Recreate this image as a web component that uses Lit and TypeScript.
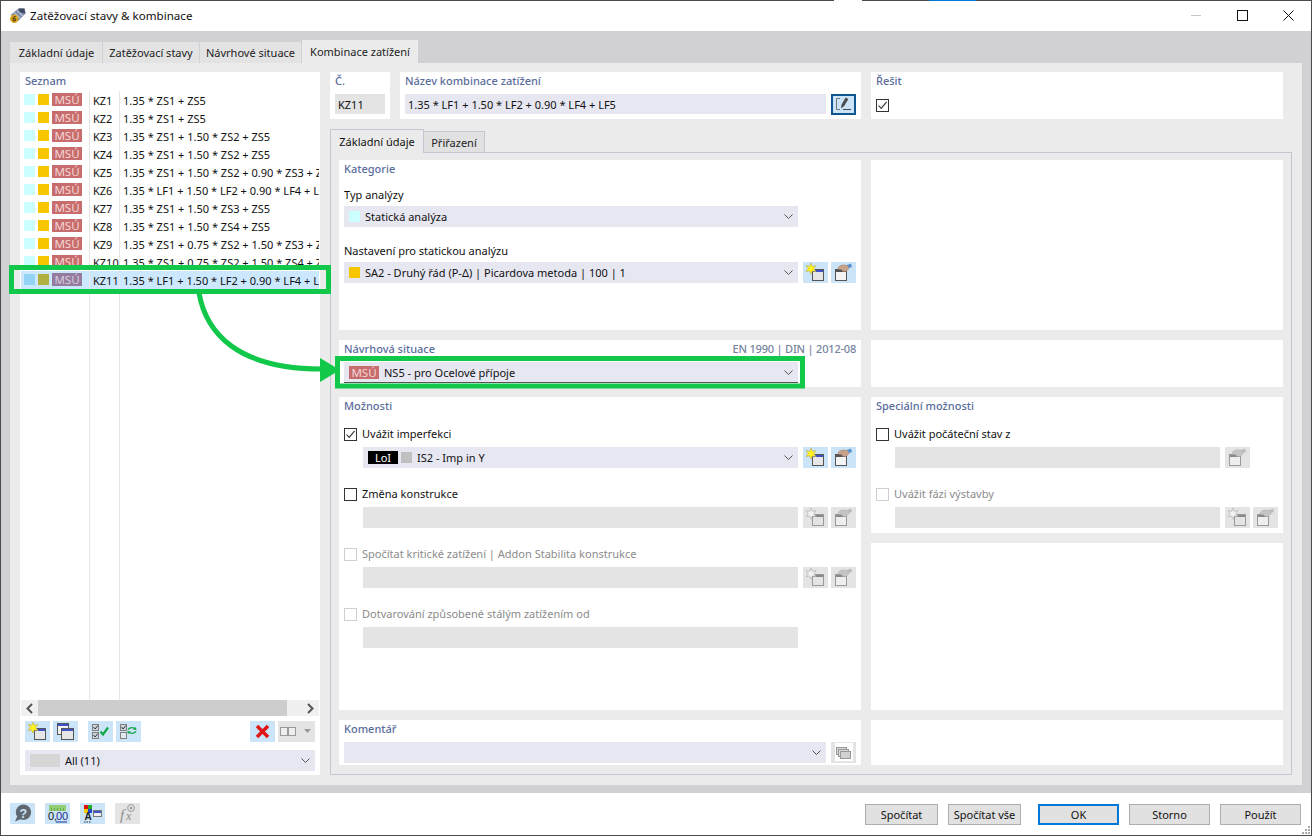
import { LitElement, html, svg, css } from 'lit';
import { customElement } from 'lit/decorators.js';

const chevron = html`<svg class="chev" width="9" height="5" viewBox="0 0 9 5"><path d="M0.5 0.5 L4.5 4.5 L8.5 0.5" fill="none" stroke="#555" stroke-width="1"/></svg>`;
const tick = html`<svg width="11" height="11" viewBox="0 0 11 11"><path d="M1.5 5.5 L4.2 8.4 L9.6 1.8" fill="none" stroke="#333" stroke-width="1.1"/></svg>`;

// small window glyph shared by most toolbar icons
const win = (x: number, y: number, w: number, h: number, bar = '#3f52c8', edge = '#555', fill = '#e6e6e6') => svg`
  <rect x=${x + .5} y=${y + .5} width=${w} height=${h} fill=${fill} stroke=${edge}/>
  <rect x=${x + 1} y=${y + 1} width=${w - 1} height="2" fill=${bar}/>`;

const newIcon = (off = false) => html`<svg width="25" height="21" viewBox="0 0 25 21">
  ${win(9, 7, 11, 11, off ? '#888' : '#3f52c8', off ? '#999' : '#555', off ? '#e4e4e4' : '#e6e6e6')}
  <path d="M8 1 L9.3 4.4 L13 3.6 L10.8 6.6 L13 9.6 L9.4 8.9 L8 12.2 L6.6 8.9 L3 9.6 L5.2 6.6 L3 3.6 L6.7 4.4 Z"
    fill=${off ? '#f2f2f2' : '#fff21e'} stroke=${off ? '#aaa' : '#b9a95a'} stroke-width=".6"/>
</svg>`;

const editIcon = (off = false) => html`<svg width="25" height="21" viewBox="0 0 25 21">
  ${win(4, 7, 11, 11, off ? '#888' : '#555', off ? '#999' : '#555', off ? '#eee' : '#f4f4f4')}
  <path d="M7 6 C8 3.5 11 3 13 3 L17 3.5 L18 6.5 L15 9.5 L12 9.5 L10.5 7.5 L8 7.5 Z" fill=${off ? '#c4c4c4' : '#c9a389'} stroke=${off ? '#aaa' : '#9d7a66'} stroke-width=".5"/>
  <path d="M16 3 L20 1.5 L21 5 L18 6 Z" fill=${off ? '#bbb' : '#5d8fd0'}/>
</svg>`;

const copyIcon = html`<svg width="25" height="21" viewBox="0 0 25 21">
  ${win(4, 2, 11, 11, '#3f52c8', '#555', '#f2f2f2')}
  ${win(8, 7, 12, 11)}
</svg>`;

const checkBox = (y: number, on = true) => svg`
  <rect x="4.5" y=${y + .5} width="6" height="6" fill=${on ? '#cdd6dd' : '#e4e9ee'} stroke="#808080"/>
  ${on ? svg`<path d="M5.5 ${y + 3} L7.2 ${y + 5} L9.8 ${y + 1.5}" fill="none" stroke="#333"/>` : ''}`;

const checkAllIcon = html`<svg width="25" height="21" viewBox="0 0 25 21">
  ${checkBox(3)}${checkBox(11)}
  <path d="M12.5 10.5 L15 13.5 L20 6.5" fill="none" stroke="#12a84a" stroke-width="2.2"/>
</svg>`;

const checkSwapIcon = html`<svg width="25" height="21" viewBox="0 0 25 21">
  ${checkBox(3)}${checkBox(11, false)}
  <path d="M12 8.5 C14 6.4 17 6.4 19 7.6" fill="none" stroke="#12a84a" stroke-width="1.4"/>
  <path d="M19.8 6 L20.6 9 L17 8.6 Z" fill="#12a84a"/>
  <path d="M20 10.5 C18 12.6 15 12.6 13 11.5" fill="none" stroke="#12a84a" stroke-width="1.4"/>
  <path d="M12 13 L11.2 10 L14.8 10.4 Z" fill="#12a84a"/>
</svg>`;

const deleteIcon = html`<svg width="25" height="21" viewBox="0 0 25 21">
  <path d="M7 5 L18 16 M18 5 L7 16" stroke="#e01414" stroke-width="3.4"/>
</svg>`;

const columnsIcon = html`<svg width="37" height="21" viewBox="0 0 37 21">
  <rect x="2.5" y="6.5" width="7" height="8" fill="#eee" stroke="#999"/>
  <rect x="10.5" y="6.5" width="7" height="8" fill="#eee" stroke="#999"/>
  <path d="M26 8 L33 8 L29.5 12 Z" fill="#999"/>
</svg>`;

const pencilIcon = html`<svg width="21" height="17" viewBox="0 0 21 17">
  <path d="M7 2.5 H3.5 V13.5 H7" fill="none" stroke="#777"/>
  <path d="M10 13.5 H18" stroke="#444"/>
  <path d="M8 12.5 L8.6 8.6 L12.6 1.6 L15.4 3 L11.2 10 Z" fill="#4d4d4d"/>
</svg>`;

const commentIcon = html`<svg width="25" height="21" viewBox="0 0 25 21">
  <rect x="4" y="1" width="18" height="18" fill="#fff"/>
  <rect x="5.5" y="5.5" width="10" height="7" fill="#d8d8d8" stroke="#999"/>
  <rect x="7.5" y="7.5" width="10" height="7" fill="#d8d8d8" stroke="#999"/>
  <rect x="9.5" y="9.5" width="10" height="7" fill="#d0d0d0" stroke="#999"/>
</svg>`;

const helpIcon = html`<svg width="25" height="21" viewBox="0 0 25 21">
  <path d="M5 18.5 L7.2 13.5 A7.6 7.6 0 1 1 10.5 16.2 Z" fill="#5f6770"/>
  <text x="13.4" y="14.5" text-anchor="middle" class="ic-t" font-size="12.5" font-weight="700" fill="#cfe4f5">?</text>
</svg>`;

const unitsIcon = html`<svg width="25" height="21" viewBox="0 0 25 21">
  <rect x="4" y="2" width="17" height="6" fill="#93cf75"/>
  <path d="M6.5 5 V8 M9.5 5 V8 M12.5 5 V8 M15.5 5 V8 M18.5 5 V8" stroke="#6ea552"/>
  <text x="3" y="17" class="ic-t" font-size="11" fill="#111">0,</text>
  <text x="11" y="17" class="ic-t" font-size="11" fill="#1b2f8a">00</text>
  <path d="M11 19 H22" stroke="#1b2f8a"/>
</svg>`;

const colorsIcon = html`<svg width="25" height="21" viewBox="0 0 25 21">
  <rect x="4" y="2" width="4" height="4" fill="#d11"/><rect x="8" y="2" width="4" height="4" fill="#2a2"/>
  <rect x="4" y="6" width="4" height="4" fill="#ec0"/><rect x="8" y="6" width="4" height="4" fill="#24c"/>
  <text x="8" y="17" text-anchor="middle" class="ic-t" font-size="10" font-weight="700" fill="#222">A</text>
  <path d="M4 19 H5.5 M6.5 19 H8 M9 19 H10.5" stroke="#333"/>
  ${win(13, 7, 8, 6, '#3f52c8', '#777', '#eee')}
</svg>`;

const fxIcon = html`<svg width="25" height="21" viewBox="0 0 25 21">
  <text x="5" y="17" class="ic-s" font-size="15" font-style="italic" fill="#8d8d8d">f</text>
  <text x="11" y="17" class="ic-s" font-size="12" font-style="italic" fill="#8d8d8d">x</text>
  <circle cx="16" cy="5" r="3.4" fill="none" stroke="#9a9a9a"/><circle cx="16" cy="5" r="1.3" fill="#9a9a9a"/>
</svg>`;

const rows = [
  ['KZ1', '1.35 * ZS1 + ZS5'],
  ['KZ2', '1.35 * ZS1 + ZS5'],
  ['KZ3', '1.35 * ZS1 + 1.50 * ZS2 + ZS5'],
  ['KZ4', '1.35 * ZS1 + 1.50 * ZS2 + ZS5'],
  ['KZ5', '1.35 * ZS1 + 1.50 * ZS2 + 0.90 * ZS3 + ZS5'],
  ['KZ6', '1.35 * LF1 + 1.50 * LF2 + 0.90 * LF4 + LF5'],
  ['KZ7', '1.35 * ZS1 + 1.50 * ZS3 + ZS5'],
  ['KZ8', '1.35 * ZS1 + 1.50 * ZS4 + ZS5'],
  ['KZ9', '1.35 * ZS1 + 0.75 * ZS2 + 1.50 * ZS3 + ZS5'],
  ['KZ10', '1.35 * ZS1 + 0.75 * ZS2 + 1.50 * ZS4 + ZS5'],
  ['KZ11', '1.35 * LF1 + 1.50 * LF2 + 0.90 * LF4 + LF5'],
];

@customElement('app-root')
export class AppRoot extends LitElement {
  static styles = css`
    :host {
      display: block;
      width: 1312px;
      height: 836px;
      position: relative;
      overflow: hidden;
      font-family: "Noto Sans", sans-serif;
      font-size: 11px;
      color: #111;
    }
    * { box-sizing: border-box; }
    svg { display: block; flex: none; }
    .ic-t { font-family: "Liberation Sans", sans-serif; }
    .ic-s { font-family: "Liberation Serif", serif; }

    .win {
      width: 1312px;
      height: 836px;
      display: flex;
      flex-direction: column;
      background: #fff;
      border: 1px solid #4b4b4b;
    }
    .titlebar {
      height: 30px;
      flex: none;
      display: flex;
      align-items: center;
      padding: 0 0 2px 8px;
      font-size: 11.6px;
    }
    .titlebar .name { margin-left: 4px; flex: 1; }
    .wc { width: 46px; height: 30px; flex: none; display: flex; align-items: center; justify-content: center; }

    .client {
      height: 762px;
      flex: none;
      background: #d0d0d5;
      padding: 9px 9px 8px;
      display: flex;
      flex-direction: column;
    }
    .tabs { display: flex; align-items: flex-end; height: 23px; flex: none; gap: 1px; }
    .tab {
      height: 21px;
      background: #e3e3e3;
      display: flex;
      align-items: center;
      justify-content: center;
      color: #222;
    }
    .tab.on { height: 23px; background: #ebebeb; }
    .t1 { width: 92px; padding-left: 1px; } .t2 { width: 96px; } .t3 { width: 101px; } .t4 { width: 116px; }

    .panel {
      flex: 1;
      background: #ebebeb;
      padding: 9px 10px 10px;
      display: flex;
      gap: 10px;
      min-height: 0;
    }
    .box { background: #fff; }
    .sec {
      height: 18px;
      line-height: 18px;
      font-weight: 500;
      color: #5b6d9c;
      white-space: nowrap;
    }

    /* left list */
    .list { width: 300px; flex: none; display: flex; flex-direction: column; padding: 0 1px 4px; }
    .list > .sec { padding-left: 4px; height: 19px; }
    .grid { flex: 1; height: 609px; display: flex; flex-direction: column; overflow: hidden; }
    .row { height: 18px; flex: none; display: flex; line-height: 20px; white-space: nowrap; }
    .row.sel { background: #cce8ff; }
    .c1, .c2 { border-right: 1px solid #e6e6e6; flex: none; }
    .c1 { width: 69px; display: flex; align-items: flex-start; gap: 3px; padding: 3px 0 0 3px; }
    .c2 { width: 30px; padding-left: 3px; }
    .c3 { flex: 1; padding-left: 3px; overflow: hidden; min-width: 0; }
    .fill { flex: 1; display: flex; }
    .sw { width: 11px; height: 11px; flex: none; }
    .cyan { background: #ccffff; }
    .gold { background: #f8c600; }
    .grey { background: #c0c0c0; }
    .row.sel .cyan { background: #93d3f5; }
    .row.sel .gold { background: #b0b040; }
    .tag {
      width: 30px;
      height: 13px;
      line-height: 13px;
      margin-top: -1px;
      text-align: center;
      background: #c86d6d;
      color: #f3d6d6;
      flex: none;
      font-size: 11.5px;
    }
    .row.sel .tag { background: #957c9c; color: #d8cbe0; }
    .tag.plain { margin-top: 0; }
    .tag.lol { background: #000; color: #fff; font-size: 11px; }
    .inl { display: flex; align-items: center; gap: 5px; }
    .inl.tight { gap: 3px; }
    .inl.tight span { margin-left: 2px; }

    .scroll { height: 16px; flex: none; background: #f0f0f0; display: flex; align-items: center; }
    .scroll .thumb { width: 249px; height: 16px; background: #cdcdcd; }
    .scroll .rest { flex: 1; }
    .arr { width: 17px; display: flex; justify-content: center; }
    .tools { display: flex; margin: 5px 4px 0; gap: 3px; flex: none; }
    .tools .spread { flex: 1; }
    .tools .g10 { margin-left: 7px; }
    .list .dd { margin: 8px 4px 0; flex: none; }
    .filter-sw { width: 30px; height: 13px; background: #d6d6d6; flex: none; }

    /* controls */
    .dd, .fld {
      height: 21px;
      display: flex;
      align-items: center;
      flex: 1;
      min-width: 0;
      padding: 0 5px;
      gap: 5px;
      background: #e7e7f1;
      white-space: nowrap;
    }
    .dd .txt { flex: 1; }
    .fld.off { background: #e4e4e4; }
    .btn { width: 25px; height: 21px; flex: none; background: #cce4f7; display: flex; align-items: center; justify-content: center; }
    .btn.off { background: #e4e4e4; }
    .btn.wide { width: 37px; }
    .btn.pen { height: 21px; border: 2px solid #0f5590; }
    .ctl { display: flex; }
    .btns { display: flex; gap: 3px; margin-left: 5px; flex: none; }
    .ctl.nobtn { padding-right: 58px; }
    .ctl.onebtn { padding-right: 28px; }
    .ctl.in { padding-left: 19px; }
    .lbl { height: 18px; line-height: 18px; white-space: nowrap; }
    .chk { height: 18px; padding-bottom: 2px; display: flex; align-items: center; gap: 5px; white-space: nowrap; margin-top: 17px; }
    .chk.first { margin-top: 10px; }
    .chk.off { color: #8b8b8b; }
    .cb { width: 13px; height: 13px; border: 1px solid #333; background: #fff; display: flex; align-items: center; justify-content: center; flex: none; }
    .chk .cb { margin-top: 2px; }
    .chk.off .cb { border-color: #cfcfcf; }
    .mt4 { margin-top: 4px; }
    .mt2 { margin-top: 2px; }
    .mt8 { margin-top: 8px; }
    .mt15 { margin-top: 15px; }

    /* right side */
    .right { flex: 1; display: flex; flex-direction: column; min-width: 0; }
    .top { height: 47px; flex: none; display: flex; gap: 10px; padding-right: 9px; }
    .top .box { padding: 0 5px; }
    .no { width: 60px; flex: none; }
    .no .fld { flex: none; height: 20px; padding: 0 3px; background: #e4e4e4; }
    .nm { width: 461px; flex: none; }
    .nm .fld { height: 20px; padding: 0 3px; }
    .solve { flex: 1; }
    .solve .cb { margin-top: 9px; }

    .itabs { height: 23px; flex: none; margin-top: 10px; display: flex; align-items: flex-end; }
    .itab { display: flex; align-items: center; justify-content: center; border: 1px solid #c6c6d2; color: #222; }
    .itab.on { width: 94px; height: 24px; background: #ebebeb; border-bottom: 0; margin-bottom: -1px; position: relative; z-index: 1; color: #111; }
    .itab.off { width: 61px; height: 22px; background: #e1e1e1; border-left: 0; margin-bottom: -1px; }
    .ipanel {
      flex: 1;
      border: 1px solid #c6c6d2;
      padding: 7px 8px 9px;
      display: grid;
      grid-template-columns: 522px 412px;
      grid-template-rows: 170px 47px 1fr 45px;
      gap: 10px;
      min-height: 0;
    }
    .ipanel .box { padding: 0 5px; }
    .sit-head { display: flex; justify-content: space-between; }
    .norm { color: #75849e; letter-spacing: -.2px; }
    .stack { display: flex; flex-direction: column; gap: 10px; min-height: 0; }
    .stack .box:last-child { flex: 1; }
    .spec { height: 136px; flex: none; }
    .chev { flex: none; }
    .sit { border-bottom: 1px solid #555; }

    /* footer */
    .footer { flex: 1; display: flex; padding: 10px 10px 0 9px; position: relative; }
    .fic { display: flex; gap: 10px; height: 21px; }
    .fb { margin-left: auto; display: flex; height: 21px; margin-top: 1px; }
    .pb {
      height: 21px;
      display: flex;
      align-items: center;
      justify-content: center;
      background: #e1e1e1;
      border: 1px solid #adadad;
    }
    .pb.w73 { width: 73px; margin-right: 10px; }
    .pb.w80 { width: 81px; margin-right: 10px; }
    .pb.ok { border: 2px solid #0078d7; margin-left: 7px; }
    .pb.last { margin-right: 0; }

    /* annotation over the screenshot */
    .note { position: absolute; left: 0; top: 0; pointer-events: none; }
    .strip { position: absolute; top: 0; height: 1px; }
    .s1 { left: 834px; width: 28px; background: #fff; }
    .s2 { left: 929px; width: 47px; background: #0078d7; }
    .grip { position: absolute; right: 1px; bottom: 1px; }
  `;

  dd(body: unknown, cls = '') {
    return html`<div class="dd ${cls}"><div class="txt">${body}</div>${chevron}</div>`;
  }

  renderList() {
    return html`<div class="box list">
      <div class="sec">Seznam</div>
      <div class="grid">
        ${rows.map((r, i) => html`<div class="row ${i === 10 ? 'sel' : ''}">
          <div class="c1"><div class="sw cyan"></div><div class="sw gold"></div><div class="tag">MSÚ</div></div>
          <div class="c2">${r[0]}</div>
          <div class="c3">${r[1]}</div>
        </div>`)}
        <div class="fill"><div class="c1"></div><div class="c2"></div></div>
      </div>
      <div class="scroll">
        <div class="arr"><svg width="7" height="11" viewBox="0 0 7 11"><path d="M6 1 L1.5 5.5 L6 10" fill="none" stroke="#555" stroke-width="2"/></svg></div>
        <div class="thumb"></div>
        <div class="rest"></div>
        <div class="arr"><svg width="7" height="11" viewBox="0 0 7 11"><path d="M1 1 L5.5 5.5 L1 10" fill="none" stroke="#555" stroke-width="2"/></svg></div>
      </div>
      <div class="tools">
        <div class="btn">${newIcon()}</div>
        <div class="btn">${copyIcon}</div>
        <div class="btn g10">${checkAllIcon}</div>
        <div class="btn">${checkSwapIcon}</div>
        <div class="spread"></div>
        <div class="btn">${deleteIcon}</div>
        <div class="btn wide off">${columnsIcon}</div>
      </div>
      <div class="dd">
        <div class="filter-sw"></div>
        <div class="txt">All (11)</div>
        ${chevron}
      </div>
    </div>`;
  }

  renderTop() {
    return html`<div class="top">
      <div class="box no">
        <div class="sec">Č.</div>
        <div class="fld mt4">KZ11</div>
      </div>
      <div class="box nm">
        <div class="sec">Název kombinace zatížení</div>
        <div class="ctl mt4">
          <div class="fld">1.35 * LF1 + 1.50 * LF2 + 0.90 * LF4 + LF5</div>
          <div class="btns"><div class="btn pen">${pencilIcon}</div></div>
        </div>
      </div>
      <div class="box solve">
        <div class="sec">Řešit</div>
        <div class="cb">${tick}</div>
      </div>
    </div>`;
  }

  renderMain() {
    return html`<div class="ipanel">
      <div class="box">
        <div class="sec">Kategorie</div>
        <div class="lbl mt8">Typ analýzy</div>
        <div class="ctl nobtn mt2">${this.dd(html`<div class="inl"><div class="sw cyan"></div>Statická analýza</div>`)}</div>
        <div class="lbl mt15">Nastavení pro statickou analýzu</div>
        <div class="ctl mt2">
          ${this.dd(html`<div class="inl"><div class="sw gold"></div>SA2 - Druhý řád (P-Δ) | Picardova metoda | 100 | 1</div>`)}
          <div class="btns"><div class="btn">${newIcon()}</div><div class="btn">${editIcon()}</div></div>
        </div>
      </div>
      <div class="box"></div>

      <div class="box">
        <div class="sit-head"><div class="sec">Návrhová situace</div><div class="sec norm">EN 1990 | DIN | 2012-08</div></div>
        <div class="ctl nobtn mt4">
          ${this.dd(html`<div class="inl"><div class="tag plain">MSÚ</div>NS5 - pro Ocelové přípoje</div>`, 'sit')}
        </div>
      </div>
      <div class="box"></div>

      <div class="box">
        <div class="sec">Možnosti</div>
        <div class="chk first"><div class="cb">${tick}</div>Uvážit imperfekci</div>
        <div class="ctl in mt4">
          ${this.dd(html`<div class="inl tight"><div class="tag plain lol">LoI</div><div class="sw grey"></div><span>IS2 - Imp in Y</span></div>`)}
          <div class="btns"><div class="btn">${newIcon()}</div><div class="btn">${editIcon()}</div></div>
        </div>
        <div class="chk"><div class="cb"></div>Změna konstrukce</div>
        <div class="ctl in mt4">
          <div class="fld off"></div>
          <div class="btns"><div class="btn off">${newIcon(true)}</div><div class="btn off">${editIcon(true)}</div></div>
        </div>
        <div class="chk off"><div class="cb"></div>Spočítat kritické zatížení | Addon Stabilita konstrukce</div>
        <div class="ctl in mt4">
          <div class="fld off"></div>
          <div class="btns"><div class="btn off">${newIcon(true)}</div><div class="btn off">${editIcon(true)}</div></div>
        </div>
        <div class="chk off"><div class="cb"></div>Dotvarování způsobené stálým zatížením od</div>
        <div class="ctl in nobtn mt4"><div class="fld off"></div></div>
      </div>
      <div class="stack">
        <div class="box spec">
          <div class="sec">Speciální možnosti</div>
          <div class="chk first"><div class="cb"></div>Uvážit počáteční stav z</div>
          <div class="ctl in onebtn mt4">
            <div class="fld off"></div>
            <div class="btns"><div class="btn off">${editIcon(true)}</div></div>
          </div>
          <div class="chk off"><div class="cb"></div>Uvážit fázi výstavby</div>
          <div class="ctl in mt4">
            <div class="fld off"></div>
            <div class="btns"><div class="btn off">${newIcon(true)}</div><div class="btn off">${editIcon(true)}</div></div>
          </div>
        </div>
        <div class="box"></div>
      </div>

      <div class="box">
        <div class="sec">Komentář</div>
        <div class="ctl mt4">
          ${this.dd('')}
          <div class="btns"><div class="btn off">${commentIcon}</div></div>
        </div>
      </div>
      <div class="box"></div>
    </div>`;
  }

  render() {
    return html`<div class="win">
      <div class="titlebar">
        <svg width="17" height="17" viewBox="0 0 16 16">
          <path d="M2 7 L9 1.5 L14.5 1.5 L15.5 6 L9 13 L3 14 Z" fill="#7d8ba8"/>
          <path d="M9 1.5 L14.5 1.5 L15.5 6 L10 5 Z" fill="#3f4a63"/>
          <path d="M5 5.5 L11 11 M7.5 3.5 L13 8.5" stroke="#c5cedd"/>
          <circle cx="5" cy="11" r="4" fill="#d9a520"/>
          <path d="M6.4 9 C4.2 8.8 3.6 10.4 3.8 12 C4.2 13.6 6.6 13.2 6.3 11.6 C6 10.4 4.6 10.6 3.9 11.4" fill="none" stroke="#5b4510"/>
        </svg>
        <div class="name">Zatěžovací stavy &amp; kombinace</div>
        <div class="wc"><svg width="10" height="1"><rect width="10" height="1" fill="#c6c6c6"/></svg></div>
        <div class="wc"><svg width="11" height="11"><rect x=".5" y=".5" width="10" height="10" fill="none" stroke="#111"/></svg></div>
        <div class="wc"><svg width="11" height="11"><path d="M.5 .5 L10.5 10.5 M10.5 .5 L.5 10.5" stroke="#111"/></svg></div>
      </div>

      <div class="client">
        <div class="tabs">
          <div class="tab t1">Základní údaje</div>
          <div class="tab t2">Zatěžovací stavy</div>
          <div class="tab t3">Návrhové situace</div>
          <div class="tab t4 on">Kombinace zatížení</div>
        </div>
        <div class="panel">
          ${this.renderList()}
          <div class="right">
            ${this.renderTop()}
            <div class="itabs">
              <div class="itab on">Základní údaje</div>
              <div class="itab off">Přiřazení</div>
            </div>
            ${this.renderMain()}
          </div>
        </div>
      </div>

      <div class="footer">
        <div class="fic">
          <div class="btn">${helpIcon}</div>
          <div class="btn">${unitsIcon}</div>
          <div class="btn">${colorsIcon}</div>
          <div class="btn off">${fxIcon}</div>
        </div>
        <div class="fb">
          <div class="pb w73">Spočítat</div>
          <div class="pb w73">Spočítat vše</div>
          <div class="pb w80 ok">OK</div>
          <div class="pb w80">Storno</div>
          <div class="pb w80 last">Použít</div>
        </div>
      </div>
    </div>

    <div class="strip s1"></div>
    <div class="strip s2"></div>

    <svg class="grip" width="10" height="10" viewBox="0 0 10 10">
      <path d="M7 1h2v2h-2z M4 4h2v2h-2z M7 4h2v2h-2z M1 7h2v2h-2z M4 7h2v2h-2z M7 7h2v2h-2z" fill="#aaa"/>
    </svg>

    <svg class="note" width="1312" height="836" viewBox="0 0 1312 836">
      <rect x="11.5" y="267.5" width="317" height="24" fill="none" stroke="#12c84a" stroke-width="5"/>
      <rect x="337.5" y="358.5" width="465" height="27.5" fill="none" stroke="#12c84a" stroke-width="5"/>
      <path d="M199 293 C206 332 236 369 322 369" fill="none" stroke="#12c84a" stroke-width="5"/>
      <path d="M320 358 L340 370 L320 382 Z" fill="#12c84a"/>
    </svg>`;
  }
}
